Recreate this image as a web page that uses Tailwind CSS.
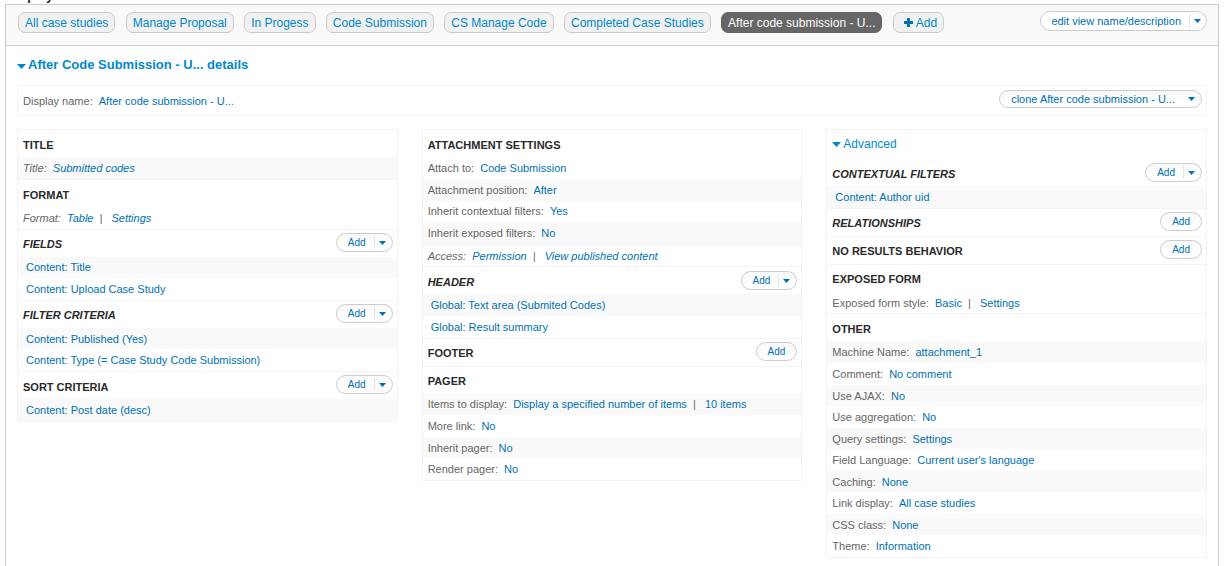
<!DOCTYPE html>
<html lang="en">
<head>
<meta charset="utf-8">
<title>Case studies | Views</title>
<script src="https://cdn.jsdelivr.net/npm/@tailwindcss/browser@4"></script>
</head>
<body class="bg-white font-['Liberation_Sans',Arial,sans-serif] text-[11px] leading-[22px] text-[#666]">
<svg class="hidden">
  <symbol id="caret" viewBox="0 0 8 4" preserveAspectRatio="none"><path d="M0 0h8L4 4z" fill="currentColor"/></symbol>
</svg>
<div class="flex h-1 items-end overflow-hidden pl-[7px]"><h2 class="pb-px text-[13px] leading-[15px] font-bold text-[#222]">Displays</h2></div>
<main class="mr-[6px] ml-[5px] min-h-[calc(100vh-4px)] border border-b-0 border-[#ccc]">
  <header class="flex items-start justify-between border-b border-[#ccc] bg-[#f9f9f9] pt-[6px] pr-[11px] pb-3 pl-3">
    <nav aria-label="Displays" class="mt-px h-[21px] text-[12px] leading-[17px] text-[#0088cc] *:mr-[7px] *:inline-block *:rounded-[7px] *:border *:border-[#ccc] *:bg-[#f1f1f1] *:px-[6px] *:pt-[2px] *:align-top *:whitespace-nowrap">
      <a href="#">All case studies</a>
      <a href="#">Manage Proposal</a>
      <a href="#">In Progess</a>
      <a href="#">Code Submission</a>
      <a href="#">CS Manage Code</a>
      <a href="#">Completed Case Studies</a>
      <a href="#" aria-current="page" class="border-[#666]! bg-[#666]! text-white">After code submission - U...</a>
      <button type="button" class="pl-[10px]!"><svg class="mr-[3px] mb-[2px] inline-block size-[9px] text-[#0071b3]" viewBox="0 0 9 9"><path d="M3 0h3v3h3v3H6v3H3V6H0V3h3z" fill="currentColor"/></svg>Add</button>
    </nav>
    <div class="flex items-center rounded-full border border-[#ccc] bg-white text-[11px] leading-[18px] text-[#0071b3]">
      <button type="button" class="pr-2 pl-[10px]">edit view name/description</button>
      <button type="button" aria-label="More view actions" class="flex h-[14px] items-center border-l border-[#e5e5e5] pr-[5px] pl-1"><svg class="h-1 w-[7px]"><use href="#caret"/></svg></button>
    </div>
  </header>

  <div class="pr-[11px] pb-2 pl-[11px]">
    <h3 class="pt-2 text-[13px] leading-[22px] font-bold"><a href="#" class="flex items-center gap-[2px] text-[#0088cc]"><svg class="mt-[3px] h-[5px] w-[9px]"><use href="#caret"/></svg>After Code Submission - U... details</a></h3>
    <div class="mt-[9px] flex items-start justify-between border border-[#f3f3f3] pt-1 pr-1 pb-[3px] pl-[5px]">
      <p>Display name: <a href="#" class="px-[3px] text-[#0071b3]">After code submission - U...</a></p>
      <div class="flex items-center rounded-full border border-[#ccc] bg-linear-to-b from-[#f9f9f9] to-white text-[11px] leading-4 text-[#0071b3]">
        <button type="button" class="pr-2 pl-[11px]">clone After code submission - U...</button>
        <button type="button" aria-label="More display actions" class="flex h-3 items-center pr-[6px] pl-[5px]"><svg class="h-1 w-[7px]"><use href="#caret"/></svg></button>
      </div>
    </div>

    <div class="mt-[13px] grid grid-cols-3 items-start gap-6 [&_a]:px-[3px] [&_a]:text-[#0071b3] [&_h4]:font-bold [&_h4]:text-[#2a2a2a] [&_h4]:uppercase [&_li]:h-[22px] [&_li]:px-[5px] [&_section>div]:flex [&_section>div]:h-[27px] [&_section>div]:items-start [&_section>div]:justify-between [&_section>div]:pt-[3px] [&_section>div]:pr-1 [&_section>div]:pl-[5px]">

      <div class="divide-y divide-[#f3f3f3] border border-[#f3f3f3]">
        <section>
          <div><h4 class="mt-px">Title</h4></div>
          <ul class="italic *:odd:bg-[#f9f9f9]"><li>Title: <a href="#">Submitted codes</a></li></ul>
        </section>
        <section>
          <div><h4 class="mt-px">Format</h4></div>
          <ul class="italic"><li>Format: <a href="#">Table</a> |&nbsp; <a href="#">Settings</a></li></ul>
        </section>
        <section>
          <div><h4 class="italic">Fields</h4>
            <span class="flex items-center rounded-full border border-[#ccc] bg-linear-to-b from-[#f9f9f9] to-white text-[10px] leading-[17px] text-[#0071b3]"><button type="button" class="pr-2 pl-[11px]">Add</button><button type="button" aria-label="More field actions" class="flex h-[13px] items-center border-l border-[#e5e5e5] pr-[6px] pl-1"><svg class="h-1 w-[7px]"><use href="#caret"/></svg></button></span>
          </div>
          <ul class="*:odd:h-[21px]! *:odd:bg-[#f9f9f9] *:odd:leading-[21px]"><li><a href="#">Content: Title</a></li><li><a href="#">Content: Upload Case Study</a></li></ul>
        </section>
        <section>
          <div><h4 class="italic">Filter criteria</h4>
            <span class="flex items-center rounded-full border border-[#ccc] bg-linear-to-b from-[#f9f9f9] to-white text-[10px] leading-[17px] text-[#0071b3]"><button type="button" class="pr-2 pl-[11px]">Add</button><button type="button" aria-label="More filter actions" class="flex h-[13px] items-center border-l border-[#e5e5e5] pr-[6px] pl-1"><svg class="h-1 w-[7px]"><use href="#caret"/></svg></button></span>
          </div>
          <ul class="*:odd:h-[21px]! *:odd:bg-[#f9f9f9]"><li><a href="#">Content: Published (Yes)</a></li><li><a href="#">Content: Type (= Case Study Code Submission)</a></li></ul>
        </section>
        <section>
          <div><h4 class="mt-px">Sort criteria</h4>
            <span class="flex items-center rounded-full border border-[#ccc] bg-linear-to-b from-[#f9f9f9] to-white text-[10px] leading-[17px] text-[#0071b3]"><button type="button" class="pr-2 pl-[11px]">Add</button><button type="button" aria-label="More sort actions" class="flex h-[13px] items-center border-l border-[#e5e5e5] pr-[6px] pl-1"><svg class="h-1 w-[7px]"><use href="#caret"/></svg></button></span>
          </div>
          <ul class="*:odd:bg-[#f9f9f9]"><li><a href="#">Content: Post date (desc)</a></li></ul>
        </section>
      </div>

      <div class="divide-y divide-[#f3f3f3] border border-[#f3f3f3]">
        <section>
          <div><h4 class="mt-px">Attachment settings</h4></div>
          <ul class="*:even:bg-[#f9f9f9]">
            <li>Attach to: <a href="#">Code Submission</a></li>
            <li>Attachment position: <a href="#">After</a></li>
            <li class="h-[21px]! leading-[21px]">Inherit contextual filters: <a href="#">Yes</a></li>
            <li>Inherit exposed filters: <a href="#">No</a></li>
          </ul>
        </section>
        <ul class="italic"><li class="h-[21px]!">Access: <a href="#">Permission</a> |&nbsp; <a href="#">View published content</a></li></ul>
        <section>
          <div><h4 class="mt-px italic">Header</h4>
            <span class="mt-px flex items-center rounded-full border border-[#ccc] bg-linear-to-b from-[#f9f9f9] to-white text-[10px] leading-[17px] text-[#0071b3]"><button type="button" class="pr-2 pl-[11px]">Add</button><button type="button" aria-label="More header actions" class="flex h-[13px] items-center border-l border-[#e5e5e5] pr-[6px] pl-1"><svg class="h-1 w-[7px]"><use href="#caret"/></svg></button></span>
          </div>
          <ul class="*:odd:bg-[#f9f9f9]"><li><a href="#">Global: Text area (Submited Codes)</a></li><li><a href="#">Global: Result summary</a></li></ul>
        </section>
        <section>
          <div><h4>Footer</h4>
            <button type="button" class="rounded-full border border-[#ccc] bg-linear-to-b from-[#f9f9f9] to-white px-[11px] text-[10px] leading-[17px] text-[#0071b3]">Add</button>
          </div>
        </section>
        <section>
          <div><h4>Pager</h4></div>
          <ul class="*:first:leading-[21px] *:odd:h-[21px]! *:odd:bg-[#f9f9f9]">
            <li>Items to display: <a href="#">Display a specified number of items</a> |&nbsp; <a href="#">10 items</a></li>
            <li>More link: <a href="#">No</a></li>
            <li>Inherit pager: <a href="#">No</a></li>
            <li>Render pager: <a href="#">No</a></li>
          </ul>
        </section>
      </div>

      <div class="border border-[#f3f3f3]">
        <h3 class="px-[5px] pt-[3px] pb-1 text-[12px] leading-[22px]"><a href="#" class="flex items-center gap-[2px] px-0! text-[#0088cc]!"><svg class="mt-px h-[5px] w-[9px]"><use href="#caret"/></svg>Advanced</a></h3>
        <div class="divide-y divide-[#f3f3f3]">
        <section>
          <div><h4 class="mt-px italic">Contextual filters</h4>
            <span class="mt-px flex items-center rounded-full border border-[#ccc] bg-linear-to-b from-[#f9f9f9] to-white text-[10px] leading-[17px] text-[#0071b3]"><button type="button" class="pr-2 pl-[11px]">Add</button><button type="button" aria-label="More contextual filter actions" class="flex h-[13px] items-center border-l border-[#e5e5e5] pr-[6px] pl-1"><svg class="h-1 w-[7px]"><use href="#caret"/></svg></button></span>
          </div>
          <ul class="*:odd:bg-[#f9f9f9]"><li><a href="#">Content: Author uid</a></li></ul>
        </section>
        <section>
          <div><h4 class="italic">Relationships</h4>
            <button type="button" class="rounded-full border border-[#ccc] bg-linear-to-b from-[#f9f9f9] to-white px-[11px] text-[10px] leading-[17px] text-[#0071b3]">Add</button>
          </div>
        </section>
        <section>
          <div><h4>No results behavior</h4>
            <button type="button" class="rounded-full border border-[#ccc] bg-linear-to-b from-[#f9f9f9] to-white px-[11px] text-[10px] leading-[17px] text-[#0071b3]">Add</button>
          </div>
        </section>
        <section>
          <div><h4>Exposed form</h4></div>
          <ul><li class="h-[21px]!">Exposed form style: <a href="#">Basic</a> |&nbsp; <a href="#">Settings</a></li></ul>
        </section>
        <section>
          <div><h4 class="mt-px">Other</h4></div>
          <ul class="*:odd:bg-[#f9f9f9] *:not-first:odd:h-[21px]!">
            <li>Machine Name: <a href="#">attachment_1</a></li>
            <li>Comment: <a href="#">No comment</a></li>
            <li>Use AJAX: <a href="#">No</a></li>
            <li>Use aggregation: <a href="#">No</a></li>
            <li>Query settings: <a href="#">Settings</a></li>
            <li>Field Language: <a href="#">Current user's language</a></li>
            <li>Caching: <a href="#">None</a></li>
            <li>Link display: <a href="#">All case studies</a></li>
            <li>CSS class: <a href="#">None</a></li>
            <li>Theme: <a href="#">Information</a></li>
          </ul>
        </section>
        </div>
      </div>
    </div>
  </div>
</main>
</body>
</html>
